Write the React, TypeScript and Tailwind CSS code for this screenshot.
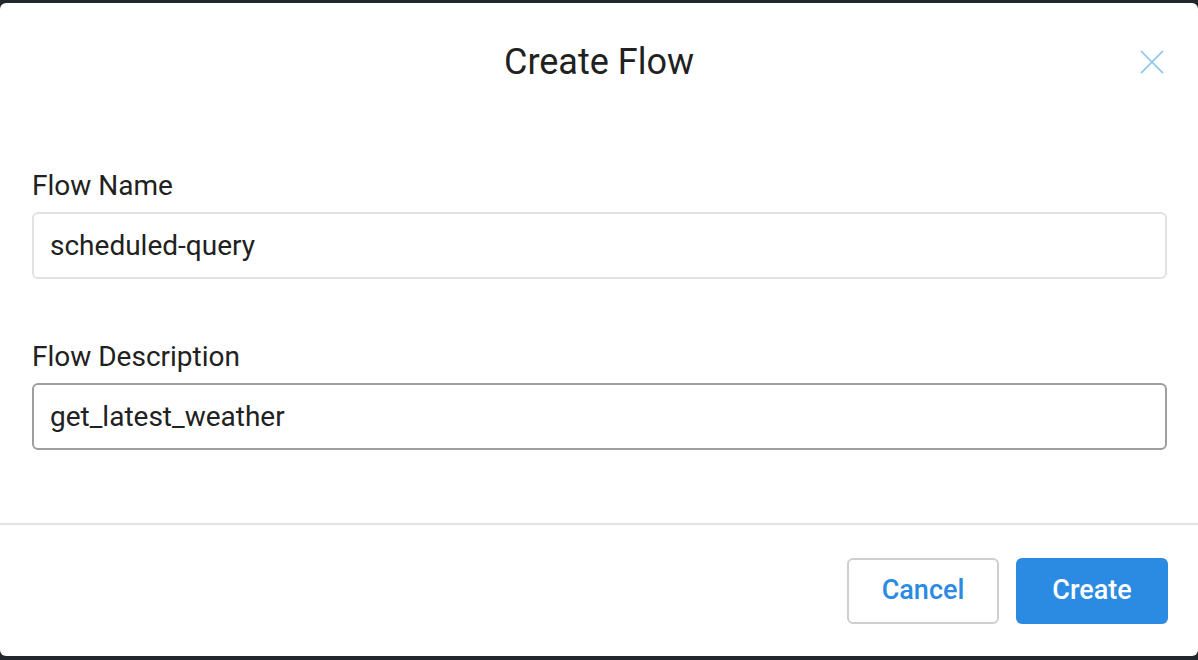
const FONT = "font-['Roboto','Liberation_Sans',sans-serif]";

function CloseIcon() {
  return (
    <svg width="24" height="24" viewBox="0 0 24 24" fill="none" stroke="#8ec4f0" strokeWidth="1.6" strokeLinecap="square">
      <line x1="1.5" y1="1.5" x2="22.5" y2="22.5" />
      <line x1="22.5" y1="1.5" x2="1.5" y2="22.5" />
    </svg>
  );
}

function Field({ label, value, focused }: { label: string; value: string; focused?: boolean }) {
  return (
    <div className="flex flex-col gap-[10px]">
      <label className="text-[28px] leading-[32px] text-[#212121]">{label}</label>
      <div
        className={
          "flex h-[67px] items-center rounded-[6px] border-2 bg-white pl-[16px] " +
          (focused ? "border-[#9e9e9e]" : "border-[#e2e2e2]")
        }
      >
        <span className="text-[28px] leading-[32px] text-[#212121]">{value}</span>
      </div>
    </div>
  );
}

export default function App() {
  return (
    <div className={`h-[660px] w-[1198px] bg-[#22272e] pt-[3px] pb-[4px] ${FONT}`}>
      <div className="flex h-full flex-col rounded-[6px] bg-white">
        <div className="grid grid-cols-[1fr_auto_1fr] items-center pt-[37px]">
          <div />
          <h1 className="text-[36px] leading-[44px] text-[#212121]">Create Flow</h1>
          <div className="flex justify-end pr-[34px]">
            <button className="flex h-[24px] w-[24px] items-center justify-center">
              <CloseIcon />
            </button>
          </div>
        </div>

        <div className="mt-[86px] flex flex-col gap-[62px] pl-[32px] pr-[31px]">
          <Field label="Flow Name" value="scheduled-query" />
          <Field label="Flow Description" value="get_latest_weather" focused />
        </div>

        <div className="mt-[73px] h-[2px] bg-[#e2e2e2]" />

        <div className="flex flex-1 items-center justify-end gap-[17px] pr-[30px]">
          <button className="h-[66px] w-[152px] rounded-[6px] border-2 border-[#cfcfcf] bg-white text-[27px] font-medium text-[#2b8ae2]">
            Cancel
          </button>
          <button className="h-[66px] w-[152px] rounded-[6px] bg-[#2b8ae2] text-[27px] font-medium text-white">
            Create
          </button>
        </div>
      </div>
    </div>
  );
}
